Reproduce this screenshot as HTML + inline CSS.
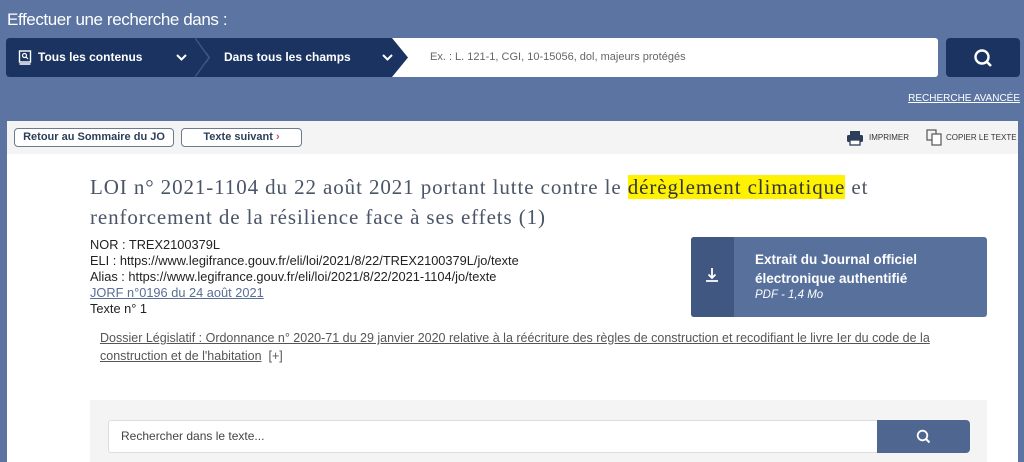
<!DOCTYPE html>
<html><head><meta charset="utf-8"><style>
*{margin:0;padding:0;box-sizing:border-box}
body{width:1024px;height:462px;overflow:hidden;background:#5b74a1;font-family:"Liberation Sans",sans-serif;position:relative}
.abs{position:absolute}
.h{left:7px;top:10px;color:#fff;font-size:17px;letter-spacing:-0.4px}
.bar{left:6px;top:38px;width:932px;height:39px;background:#fff;border-radius:3px;overflow:hidden}
.seg{position:absolute;top:0;height:39px;background:#1b3360;color:#fff;font-size:12px;font-weight:bold;line-height:39px}
.btn{left:946px;top:38px;width:74px;height:39px;background:#1b3360;border-radius:4px}
.adv{right:4px;top:93px;color:#fff;font-size:10px;text-decoration:underline}
.panel{left:7px;top:121px;width:1011px;height:341px;background:#fff}
.tool{left:7px;top:121px;width:1011px;height:33px;background:#f4f4f5}
.pill{top:128px;height:19px;border:1px solid #6b7a90;border-radius:4px;background:#fff;font-size:11px;font-weight:bold;color:#2c3e5a;text-align:center;line-height:17px}
.t{left:90px;top:172px;font-family:"Liberation Serif",serif;font-size:21px;letter-spacing:0.9px;color:#4a5568;line-height:30px;width:800px}
.meta{left:90px;top:237px;font-size:12.8px;color:#222;line-height:16px}
.dl{left:691px;top:237px;width:296px;height:80px;background:#57709c;border-radius:3px;overflow:hidden}
.dos{left:100px;top:329px;font-size:12.5px;color:#555;line-height:18px;width:850px}
.dos u{text-decoration:underline}
.sb{left:90px;top:400px;width:897px;height:62px;background:#f4f4f5}
</style></head><body>
<div class="abs h">Effectuer une recherche dans :</div>
<div class="abs bar">
 <div class="seg" style="left:0;width:200px;padding-left:32px">Tous les contenus
  <svg style="position:absolute;left:12px;top:12px" width="14" height="15" viewBox="0 0 14 15"><rect x="1.5" y="1" width="11" height="11" fill="none" stroke="#fff" stroke-width="1.4"/><line x1="1.5" y1="14" x2="12.5" y2="14" stroke="#fff" stroke-width="1.4"/><circle cx="6.5" cy="5.5" r="2" fill="none" stroke="#fff" stroke-width="1.2"/><line x1="8" y1="7" x2="10" y2="9" stroke="#fff" stroke-width="1.2"/></svg>
  <svg style="position:absolute;left:170px;top:16px" width="11" height="8"><polyline points="1,1 5.5,5.5 10,1" fill="none" stroke="#fff" stroke-width="2"/></svg>
 </div>
 <div class="seg" style="left:190px;width:212px;padding-left:28px;clip-path:polygon(0 0,196px 0,212px 50%,196px 100%,0 100%,14px 50%)">Dans tous les champs
  <svg style="position:absolute;left:186px;top:16px" width="11" height="8"><polyline points="1,1 5.5,5.5 10,1" fill="none" stroke="#fff" stroke-width="2"/></svg>
 </div>
 <div style="position:absolute;left:190px;top:0;width:14px;height:39px;background:#1b3360;clip-path:polygon(0 0,14px 50%,0 100%)"></div>
 <svg style="position:absolute;left:189px;top:0" width="16" height="39"><polyline points="0,0 14,19.5 0,39" fill="none" stroke="#3d5580" stroke-width="1.5"/></svg>
 <div style="position:absolute;left:424px;top:0;line-height:39px;font-size:11px;color:#666">Ex. : L. 121-1, CGI, 10-15056, dol, majeurs protégés</div>
</div>
<div class="abs btn"><svg style="position:absolute;left:27px;top:10px" width="20" height="20"><circle cx="9" cy="9" r="6.5" fill="none" stroke="#fff" stroke-width="2.4"/><line x1="13.5" y1="13.5" x2="18" y2="18" stroke="#fff" stroke-width="2.6"/></svg></div>
<div class="abs adv">RECHERCHE AVANCÉE</div>
<div class="abs panel"></div>
<div class="abs tool"></div>
<div class="abs pill" style="left:14px;width:160px">Retour au Sommaire du JO</div>
<div class="abs pill" style="left:181px;width:121px">Texte suivant <span style="color:#c55">›</span></div>
<svg class="abs" style="left:846px;top:130px" width="18" height="16"><rect x="4" y="1" width="10" height="4" fill="#2c3e5a"/><rect x="1" y="5" width="16" height="7" rx="1.5" fill="#2c3e5a"/><rect x="4" y="10" width="10" height="5" fill="#fff" stroke="#2c3e5a" stroke-width="1.3"/></svg>
<div class="abs" style="left:869px;top:133px;font-size:8px;color:#333">IMPRIMER</div>
<svg class="abs" style="left:926px;top:129px" width="17" height="17"><rect x="1" y="1" width="9" height="10" fill="none" stroke="#555" stroke-width="1.2"/><rect x="6" y="5" width="9" height="11" fill="#fff" stroke="#555" stroke-width="1.2"/></svg>
<div class="abs" style="left:946px;top:133px;font-size:8px;color:#333">COPIER LE TEXTE</div>
<div class="abs t">LOI n° 2021-1104 du 22 août 2021 portant lutte contre le <span style="background:#fff200;color:#333">dérèglement climatique</span> et renforcement de la résilience face à ses effets (1)</div>
<div class="abs meta">NOR : TREX2100379L<br>ELI : https://www.legifrance.gouv.fr/eli/loi/2021/8/22/TREX2100379L/jo/texte<br>Alias : https://www.legifrance.gouv.fr/eli/loi/2021/8/22/2021-1104/jo/texte<br><span style="color:#5a6f95;text-decoration:underline">JORF n°0196 du 24 août 2021</span><br>Texte n° 1</div>
<div class="abs dl">
 <div style="position:absolute;left:0;top:0;width:43px;height:80px;background:#3f5781"></div>
 <svg style="position:absolute;left:14px;top:30px" width="14" height="16"><line x1="7" y1="1" x2="7" y2="11" stroke="#fff" stroke-width="1.8"/><polyline points="3.5,7.5 7,11 10.5,7.5" fill="none" stroke="#fff" stroke-width="1.8"/><line x1="1" y1="14" x2="13" y2="14" stroke="#fff" stroke-width="1.8"/></svg>
 <div style="position:absolute;left:64px;top:13px;color:#fff;font-weight:bold;font-size:13.5px;line-height:19px">Extrait du Journal officiel<br>électronique authentifié</div>
 <div style="position:absolute;left:64px;top:52px;color:#fff;font-style:italic;font-size:11.5px">PDF - 1,4 Mo</div>
</div>
<div class="abs dos"><u>Dossier Législatif : Ordonnance n° 2020-71 du 29 janvier 2020 relative à la réécriture des règles de construction et recodifiant le livre Ier du code de la construction et de l'habitation</u> &nbsp;[+]</div>
<div class="abs sb"></div>
<div class="abs" style="left:108px;top:420px;width:770px;height:33px;background:#fff;border:1px solid #ddd;border-right:none;border-radius:3px 0 0 3px;font-size:12px;color:#444;line-height:31px;padding-left:12px">Rechercher dans le texte...</div>
<div class="abs" style="left:877px;top:420px;width:93px;height:33px;background:#4f6790;border-radius:0 4px 4px 0"><svg style="position:absolute;left:39px;top:9px" width="15" height="15"><circle cx="6.5" cy="6.5" r="4.8" fill="none" stroke="#fff" stroke-width="1.8"/><line x1="10" y1="10" x2="13.5" y2="13.5" stroke="#fff" stroke-width="2"/></svg></div>
</body></html>
